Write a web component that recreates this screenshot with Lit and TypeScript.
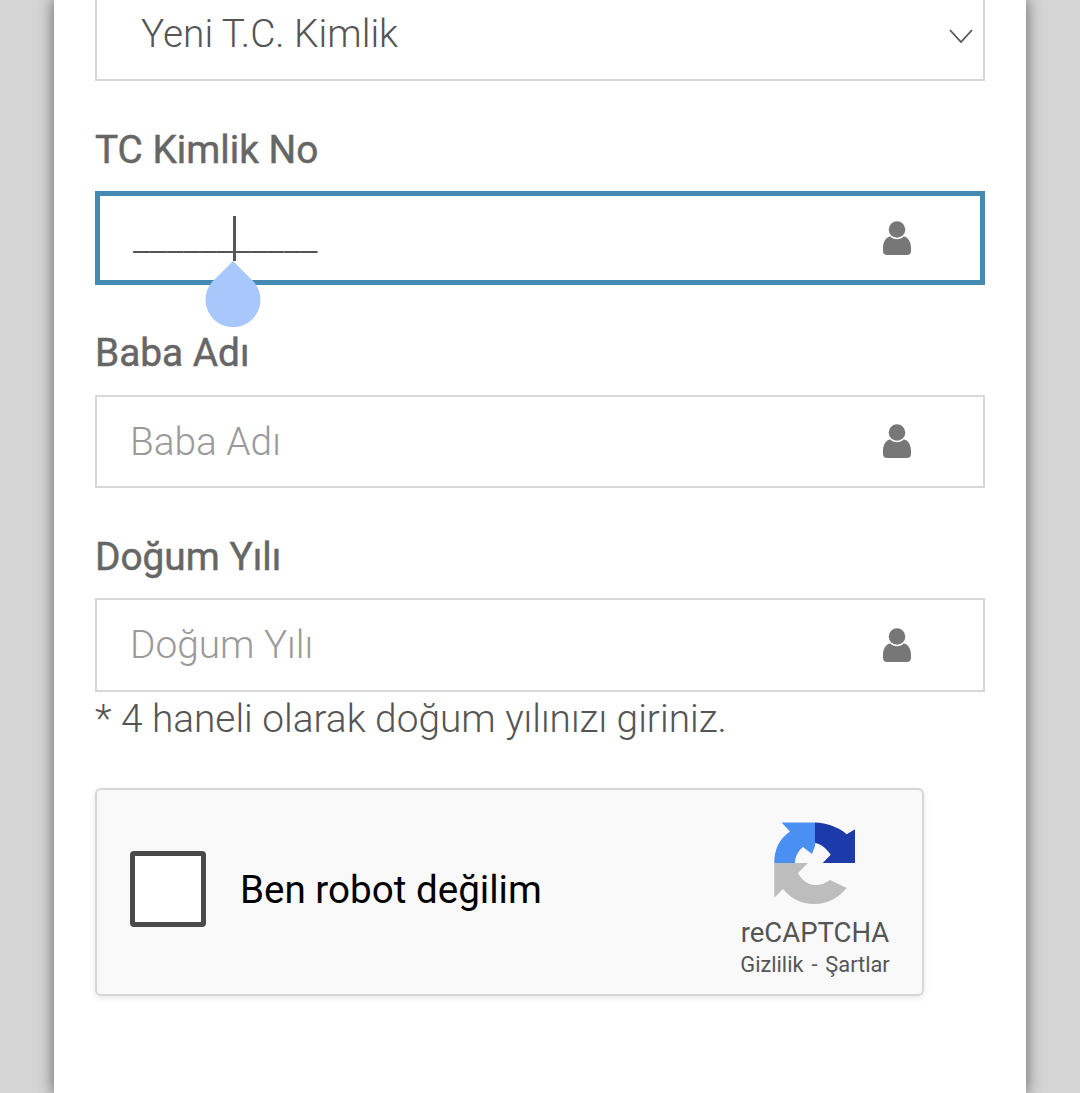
import { LitElement, html, css } from "lit";
import { customElement } from "lit/decorators.js";

const person = html`<svg class="person" viewBox="0 0 28 34" width="28" height="34">
  <circle cx="14" cy="8.5" r="8.3" fill="#777"></circle>
  <path d="M7.5 15.5 C10 19 18 19 20.5 15.5 C25 16 28 20.5 28 27 L28 30 C28 32.5 26.5 34 24 34 L4 34 C1.5 34 0 32.5 0 30 L0 27 C0 20.5 3 16 7.5 15.5 Z" fill="#777"></path>
</svg>`;

@customElement("app-root")
export class AppRoot extends LitElement {
  static styles = css`
    :host { display: block; width: 1080px; height: 1093px; overflow: hidden; background: #d6d5d5; font-family: Roboto, "Noto Sans", sans-serif; }
    .page { display: flex; justify-content: center; height: 1093px; overflow: hidden; }
    .card { width: 972px; height: 1093px; box-sizing: border-box; background: #fff; padding: 0 41px; box-shadow: 0 0 14px 1px rgba(0,0,0,.5); display: flex; flex-direction: column; }
    .select { margin-top: -12px; height: 93px; box-sizing: border-box; border: 2px solid #d5d7da; display: flex; align-items: center; justify-content: space-between; padding: 0 10px 0 44px; font-size: 38.8px; font-weight: 300; color: #555; }
    .select span { margin-top: -2px; }
    .select svg { display: block; margin-top: 2px; }
    .label { height: 110px; box-sizing: border-box; padding-top: 43px; font-size: 38.8px; line-height: 52px; font-weight: 400; color: #666; -webkit-text-stroke: 0.5px #666; }
    .label.near { padding-top: 42px; }
    .field { position: relative; height: 93px; box-sizing: border-box; border: 2px solid #d5d7da; display: flex; align-items: center; justify-content: space-between; padding: 0 72px 0 33px; font-size: 38.8px; font-weight: 300; color: #9a9a9a; }
    .field span { margin-top: -1px; }
    .field.tall { height: 94px; }
    .field.focus { height: 94px; border: 5px solid #448ab3; padding: 0 69px 0 33px; color: #555; }
    .person { display: block; margin-top: -1px; }
    .mask { font-size: 38.8px; font-weight: 300; line-height: 46px; color: #555; white-space: nowrap; }
    .caret { position: absolute; left: 133px; top: 20px; width: 3px; height: 45px; background: #555; }
    .drop { position: absolute; left: 105px; top: 65px; }
    .help { font-size: 38.8px; font-weight: 300; color: #555; line-height: 48px; margin-top: 3px; }
    .captcha { margin-top: 45px; width: 829px; height: 208px; box-sizing: border-box; background: #f9f9f9; border: 2px solid #d6d6d6; border-radius: 6px; box-shadow: 0 2px 6px rgba(0,0,0,.1); display: flex; align-items: center; padding: 0 31px 0 33px; }
    .box { width: 76px; height: 76px; box-sizing: border-box; background: #fff; border: 5px solid #4a4a4a; border-radius: 4px; flex: none; margin-top: -6px; }
    .robot { margin-left: 34px; font-size: 38.6px; color: #000; flex: 1; margin-top: -6px; }
    .brand { display: flex; flex-direction: column; align-items: center; width: 152px; color: #555; margin-top: 17px; }
    .brand svg { display: block; }
    .name { font-size: 27.5px; line-height: 34px; margin-top: 11px; }
    .links { font-size: 21.8px; line-height: 28px; margin-top: 1px; white-space: nowrap; word-spacing: 2.5px; }
  `;

  render() {
    return html`<div class="page"><div class="card">
      <div class="select">
        <span>Yeni T.C. Kimlik</span>
        <svg width="24" height="14" viewBox="0 0 24 14"><path d="M1 1 L12 13 L23 1" fill="none" stroke="#555" stroke-width="1.8"></path></svg>
      </div>
      <div class="label">TC Kimlik No</div>
      <div class="field focus">
        <div class="mask">___________</div>
        ${person}
        <div class="caret"></div>
        <svg class="drop" width="56" height="66" viewBox="0 0 56 66"><path d="M28 0 L49 21 A27.5 27.5 0 1 1 7 21 Z" fill="#a8c7fa"></path></svg>
      </div>
      <div class="label near">Baba Adı</div>
      <div class="field"><span>Baba Adı</span>${person}</div>
      <div class="label">Doğum Yılı</div>
      <div class="field tall"><span>Doğum Yılı</span>${person}</div>
      <div class="help">* 4 haneli olarak doğum yılınızı giriniz.</div>
      <div class="captcha">
        <div class="box"></div>
        <div class="robot">Ben robot değilim</div>
        <div class="brand">
          <svg width="82" height="83" viewBox="0 0 82 83">
            <path d="M7.6 .6 L41 .6 L41 24 L38 32 L29 25 C24 29 21 35 21 41 L.3 41 C.3 28 5 17 16 9.6 Z" fill="#4a90f2"></path>
            <path d="M41 .6 C53 1 64 5 72.7 12.3 L81 7.3 L81 41 L48.7 41 L56.7 32.7 C52 26 47 22 41 21 Z" fill="#1c3aa9"></path>
            <path d="M.3 41 L34 41 L24 51 C28 59 35 63 41 63 C47 63 52 61 56 58 L72.7 66 C64 76 54 82 40 82 C28 82 17 77 9 67 L.3 75.7 Z" fill="#bdbdbd"></path>
          </svg>
          <div class="name">reCAPTCHA</div>
          <div class="links">Gizlilik - Şartlar</div>
        </div>
      </div>
    </div></div>`;
  }
}
